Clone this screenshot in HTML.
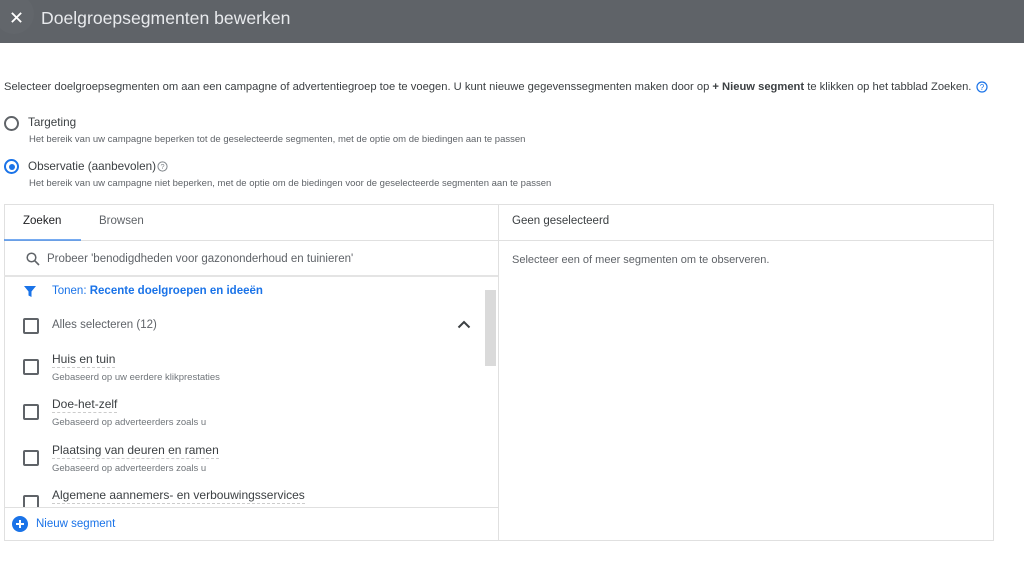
<!DOCTYPE html>
<html><head><meta charset="utf-8"><style>
*{margin:0;padding:0;box-sizing:border-box}
body{width:1024px;height:563px;background:#fff;font-family:"Liberation Sans",sans-serif;color:#3c4043;position:relative;overflow:hidden}
.a{position:absolute;white-space:nowrap}
.hdr{left:0;top:0;width:1024px;height:43px;background:#5f6368}
.cb{width:16px;height:16px;border:2px solid #5f6368;border-radius:2px;position:absolute}
.lbl{font-size:12px;color:#3c4043;border-bottom:1px dashed #ccc;padding-bottom:1px}
.sub{font-size:9.5px;color:#70757a}
</style></head><body>
<div class="a hdr"></div>
<div class="a" style="left:-6px;top:-6px;width:40px;height:40px;border-radius:50%;background:#62666b"></div>
<svg class="a" style="left:10px;top:11px" width="13" height="13" viewBox="0 0 14 14"><path d="M2 2L12 12M12 2L2 12" stroke="#fff" stroke-width="2"/></svg>
<div class="a" style="left:41px;top:8px;font-size:17.6px;color:#e8eaed">Doelgroepsegmenten bewerken</div>

<div class="a" style="left:4px;top:81px;font-size:11.2px;color:#3c4043">Selecteer doelgroepsegmenten om aan een campagne of advertentiegroep toe te voegen. U kunt nieuwe gegevenssegmenten maken door op <b>+ Nieuw segment</b> te klikken op het tabblad Zoeken.</div>
<svg class="a" style="left:976px;top:81px" width="12" height="12" viewBox="0 0 12 12"><circle cx="6" cy="6" r="5" fill="none" stroke="#1a73e8" stroke-width="1.2"/><text x="6" y="8.8" font-size="8" text-anchor="middle" fill="#1a73e8" font-family="Liberation Sans">?</text></svg>

<div class="a" style="left:4px;top:116px;width:15px;height:15px;border:2px solid #5f6368;border-radius:50%"></div>
<div class="a" style="left:28px;top:116px;font-size:11.7px">Targeting</div>
<div class="a sub" style="left:29px;top:134px;color:#5f6368">Het bereik van uw campagne beperken tot de geselecteerde segmenten, met de optie om de biedingen aan te passen</div>
<div class="a" style="left:4px;top:159px;width:15px;height:15px;border:2px solid #1a73e8;border-radius:50%"><div style="margin:2.5px;width:6px;height:6px;border-radius:50%;background:#1a73e8"></div></div>
<div class="a" style="left:28px;top:160px;font-size:11.7px">Observatie (aanbevolen)</div>
<svg class="a" style="left:157px;top:161px" width="11" height="11" viewBox="0 0 12 12"><circle cx="6" cy="6" r="5" fill="none" stroke="#80868b" stroke-width="1.1"/><text x="6" y="8.8" font-size="8" text-anchor="middle" fill="#80868b" font-family="Liberation Sans">?</text></svg>
<div class="a sub" style="left:29px;top:178px;color:#5f6368">Het bereik van uw campagne niet beperken, met de optie om de biedingen voor de geselecteerde segmenten aan te passen</div>

<div class="a" style="left:4px;top:204px;width:990px;height:337px;border:1px solid #e0e0e0"></div>
<div class="a" style="left:498px;top:204px;width:1px;height:337px;background:#e0e0e0"></div>
<div class="a" style="left:4px;top:240px;width:990px;height:1px;background:#e0e0e0"></div>
<div class="a" style="left:4px;top:239px;width:77px;height:2px;background:#1a73e8;opacity:.6"></div>
<div class="a" style="left:23px;top:215px;font-size:11.5px;color:#202124">Zoeken</div>
<div class="a" style="left:99px;top:215px;font-size:11.5px;color:#5f6368">Browsen</div>
<div class="a" style="left:512px;top:215px;font-size:11.5px;color:#3c4043">Geen geselecteerd</div>
<div class="a" style="left:512px;top:254px;font-size:11px;color:#5f6368">Selecteer een of meer segmenten om te observeren.</div>

<svg class="a" style="left:26px;top:252px" width="14" height="14" viewBox="0 0 14 14"><circle cx="5.5" cy="5.5" r="4.3" fill="none" stroke="#5f6368" stroke-width="1.5"/><path d="M8.7 8.7L13 13" stroke="#5f6368" stroke-width="1.6"/></svg>
<div class="a" style="left:47px;top:253px;font-size:11.5px;color:#5f6368">Probeer 'benodigdheden voor gazononderhoud en tuinieren'</div>
<div class="a" style="left:4px;top:275px;width:494px;height:2px;background:#e4e4e4"></div>

<div class="a" style="left:485px;top:290px;width:11px;height:76px;background:#dadada"></div>
<svg class="a" style="left:23px;top:285px" width="14" height="13" viewBox="0 0 14 13"><path d="M1 1H13L8.5 6.5V12L5.5 10.5V6.5Z" fill="#1a73e8"/></svg>
<div class="a" style="left:52px;top:285px;font-size:11.5px;color:#1a73e8">Tonen: <b>Recente doelgroepen en ideeën</b></div>

<div class="cb" style="left:23px;top:318px"></div>
<div class="a" style="left:52px;top:319px;font-size:11.5px;color:#5f6368">Alles selecteren (12)</div>
<svg class="a" style="left:457px;top:320px" width="14" height="9" viewBox="0 0 14 9"><path d="M1.5 7.5L7 2L12.5 7.5" fill="none" stroke="#3c4043" stroke-width="2"/></svg>

<div class="cb" style="left:23px;top:359px"></div>
<div class="a lbl" style="left:52px;top:352px">Huis en tuin</div>
<div class="a sub" style="left:52px;top:372px">Gebaseerd op uw eerdere klikprestaties</div>
<div class="cb" style="left:23px;top:404px"></div>
<div class="a lbl" style="left:52px;top:397px">Doe-het-zelf</div>
<div class="a sub" style="left:52px;top:417px">Gebaseerd op adverteerders zoals u</div>
<div class="cb" style="left:23px;top:450px"></div>
<div class="a lbl" style="left:52px;top:443px">Plaatsing van deuren en ramen</div>
<div class="a sub" style="left:52px;top:463px">Gebaseerd op adverteerders zoals u</div>
<div class="a" style="left:4px;top:494px;width:494px;height:13px;overflow:hidden">
 <div class="cb" style="left:19px;top:1px"></div>
</div>
<div class="a lbl" style="left:52px;top:488px">Algemene aannemers- en verbouwingsservices</div>
<div class="a" style="left:4px;top:507px;width:494px;height:1px;background:#e0e0e0"></div>

<svg class="a" style="left:12px;top:516px" width="16" height="16" viewBox="0 0 16 16"><circle cx="8" cy="8" r="8" fill="#1a73e8"/><path d="M8 4V12M4 8H12" stroke="#fff" stroke-width="2"/></svg>
<div class="a" style="left:36px;top:518px;font-size:11.5px;color:#1a73e8">Nieuw segment</div>
</body></html>
